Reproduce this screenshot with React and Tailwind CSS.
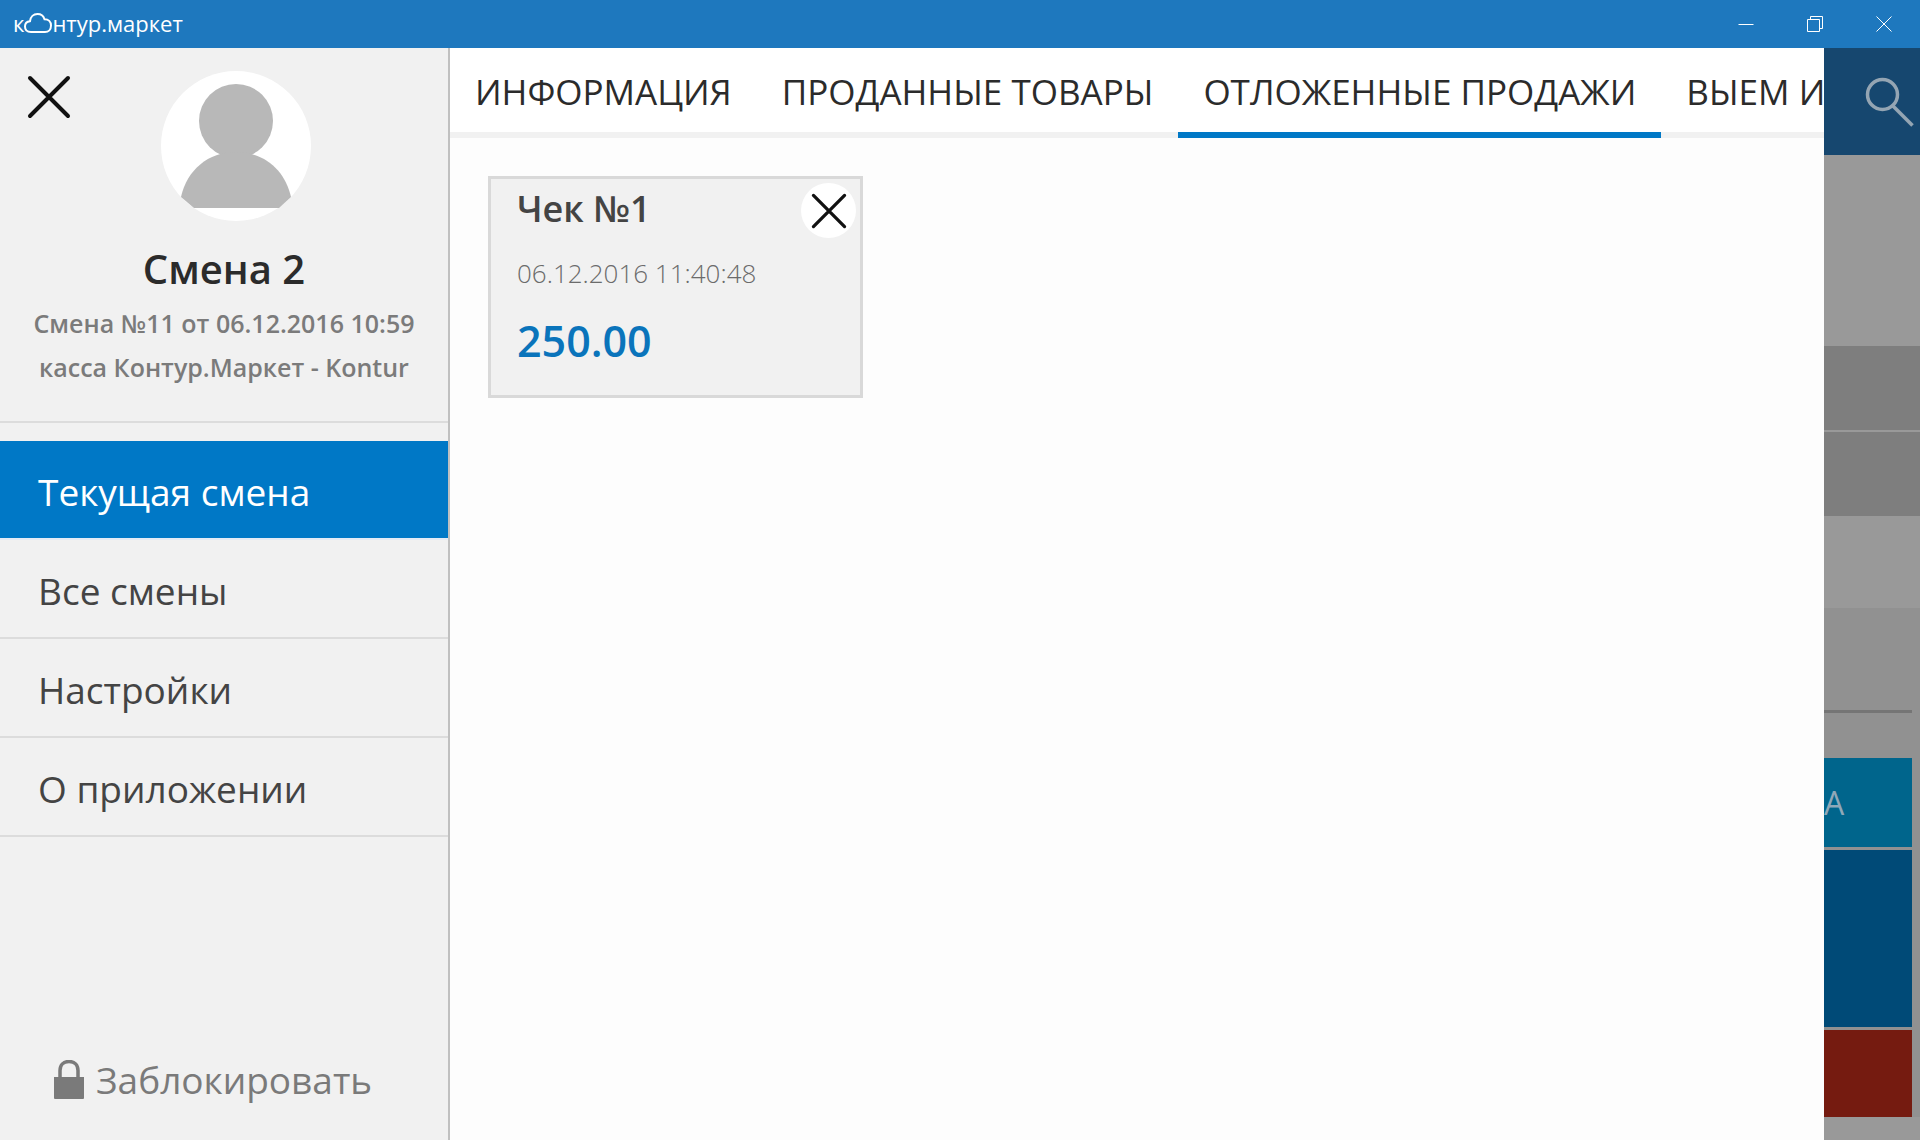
import clsx from 'clsx'

const menuItems = ['Текущая смена', 'Все смены', 'Настройки', 'О приложении']

const tabs = ['ИНФОРМАЦИЯ', 'ПРОДАННЫЕ ТОВАРЫ', 'ОТЛОЖЕННЫЕ ПРОДАЖИ', 'ВЫЕМ И']

const receipts = [{ id: 1, title: 'Чек №1', date: '06.12.2016 11:40:48', total: '250.00' }]

function CrossIcon({ className, strokeWidth }) {
  return (
    <svg className={className} viewBox="0 0 44 44" fill="none" stroke="currentColor" strokeWidth={strokeWidth} strokeLinecap="round" aria-hidden="true">
      <path d="M3 3L41 41M41 3L3 41" />
    </svg>
  )
}

function TitleBar() {
  return (
    <header className="flex h-12 shrink-0 items-center justify-between bg-[#1e78be] text-white">
      <div className="flex items-center pb-[2px] pl-[13px] text-[22px] leading-8">
        <span>к</span>
        <svg className="h-5 w-7" viewBox="0 0 28 20" fill="none" stroke="currentColor" strokeWidth="2" aria-label="о">
          <path d="M7 19C3.500 19 1 17 1 13.500C1 10.500 3 8.500 6 8.200C6.500 3.800 9.500 1 13.500 1C17 1 19.500 3 20.500 6.200C24.500 6.200 27 9 27 12.500C27 16.500 24.500 19 21 19Z" />
        </svg>
        <span>нтур.маркет</span>
      </div>
      <div className="flex h-full pr-[2px]">
        <button type="button" aria-label="Свернуть" className="flex w-[69px] items-center justify-center">
          <svg className="size-4" viewBox="0 0 16 16" stroke="currentColor" aria-hidden="true">
            <path d="M0.500 8.500H15.500" />
          </svg>
        </button>
        <button type="button" aria-label="Развернуть" className="flex w-[69px] items-center justify-center">
          <svg className="size-4" viewBox="0 0 16 16" fill="none" stroke="currentColor" aria-hidden="true">
            <path d="M0.500 3.500H12.500V15.500H0.500ZM3.500 3.500V0.500H15.500V12.500H12.500" />
          </svg>
        </button>
        <button type="button" aria-label="Закрыть окно" className="flex w-[69px] items-center justify-center">
          <svg className="size-4" viewBox="0 0 16 16" stroke="currentColor" aria-hidden="true">
            <path d="M0.500 0.500L15.500 15.500M15.500 0.500L0.500 15.500" />
          </svg>
        </button>
      </div>
    </header>
  )
}

function Sidebar() {
  return (
    <aside className="flex w-[450px] shrink-0 flex-col border-r-2 border-[#c0c0c0] bg-[#f1f1f1]">
      {/* Shift info */}
      <div className="border-b-2 border-[#dcdcdc] pb-8">
        <div className="flex items-start gap-[90px] pl-[27px] pt-[23px]">
          <button type="button" aria-label="Закрыть меню" className="pt-1 text-[#111]">
            <CrossIcon className="size-11" strokeWidth={4} />
          </button>
          <svg className="size-[150px]" viewBox="0 0 150 150" aria-hidden="true">
            <circle cx="75" cy="75" r="75" fill="#fff" />
            <circle cx="75" cy="50" r="37" fill="#b8b8b8" />
            <path d="M20 126C26 99 47 81 75 81S124 99 130 126L118 137H33Z" fill="#b8b8b8" />
          </svg>
        </div>
        <div className="px-4 pt-5 text-center font-semibold">
          <h1 className="text-[40px] leading-[56px] text-[#2b2b2b]">Смена 2</h1>
          <p className="pt-1 text-[25px] leading-11 text-[#7b7b7b]">
            Смена №11 от 06.12.2016 10:59
            <br />
            касса Контур.Маркет - Kontur
          </p>
        </div>
      </div>

      <nav className="pt-[18px]">
        {menuItems.map((item, index) => (
          <a
            key={item}
            href="#"
            className={clsx(
              'block border-b-2 px-[38px] pb-[18px] pt-[23px] text-[37px] leading-[56px]',
              index === 0 ? 'border-[#e4ebf5] bg-[#0078c6] bg-clip-padding text-white' : 'border-[#dcdcdc] text-[#444]'
            )}
          >
            {item}
          </a>
        ))}
      </nav>

      <button type="button" className="mt-auto mb-8 flex items-center gap-3 pl-[54px] text-[37px] leading-[56px] text-[#7a7a7a]">
        <svg className="h-10 w-[30px]" viewBox="0 0 30 40" aria-hidden="true">
          <path d="M0 17H30V38Q30 39 29 39H1Q0 39 0 38Z" fill="currentColor" />
          <path d="M6 18V10.500C6 5 9.500 1.500 15 1.500S24 5 24 10.500V18" fill="none" stroke="currentColor" strokeWidth="3.500" />
        </svg>
        Заблокировать
      </button>
    </aside>
  )
}

function ReceiptCard({ receipt }) {
  return (
    <article className="relative w-[375px] border-[3px] border-[#d9d9d9] bg-[#f1f1f1] px-[26px] pb-[22px] pt-[6px]">
      <h2 className="text-[36px] font-semibold leading-[48px] text-[#444]">{receipt.title}</h2>
      <p className="pt-4 text-[26px] font-light leading-[48px] text-[#6b6b6b]">{receipt.date}</p>
      <p className="pt-3 text-[43px] font-semibold leading-[64px] text-[#0a74bb]">{receipt.total}</p>
      <button
        type="button"
        aria-label="Удалить чек"
        className="absolute right-1 top-1 flex size-[55px] items-center justify-center rounded-full bg-white text-[#111]"
      >
        <CrossIcon className="size-9" strokeWidth={4} />
      </button>
    </article>
  )
}

function Content() {
  return (
    <main className="min-w-0 flex-1 bg-[#fdfdfd]">
      <div className="flex overflow-hidden bg-white">
        {tabs.map((tab, index) => (
          <button
            key={tab}
            type="button"
            className={clsx(
              'shrink-0 whitespace-nowrap border-b-6 px-[25px] pb-3 pt-4 text-[35px] leading-[56px] text-[#2b2b2b]',
              index === 2 ? 'border-[#0078c6]' : 'border-[#f1f1f1]'
            )}
          >
            {tab}
          </button>
        ))}
      </div>
      <div className="flex flex-wrap gap-6 px-[38px] py-[38px]">
        {receipts.map((receipt) => (
          <ReceiptCard key={receipt.id} receipt={receipt} />
        ))}
      </div>
    </main>
  )
}

/* Dimmed edge of the sale screen behind the open panel */
function SaleScreenEdge() {
  return (
    <div className="flex w-24 shrink-0 flex-col bg-[#999]">
      <div className="h-[107px] bg-[#16476f]">
        <button type="button" aria-label="Поиск" className="block pl-10 pt-7 text-[#94a5b3]">
          <svg className="size-[52px]" viewBox="0 0 52 52" fill="none" stroke="currentColor" strokeWidth="3.500" aria-hidden="true">
            <circle cx="18.500" cy="18.500" r="15" />
            <path d="M28.500 29.500L48.500 49.500" />
          </svg>
        </button>
      </div>
      <div className="mt-[191px] h-[84px] bg-[#7e7e7e]" />
      <div className="mt-[2px] h-[84px] bg-[#7e7e7e]" />
      <div className="mt-[92px] flex flex-col gap-[3px] bg-[#919191] pr-2">
        <div className="mb-[42px] h-[105px] border-b-3 border-[#757575]" />
        <button type="button" className="h-[89px] bg-[#00658c] text-left text-[32px] text-[#8fa8b8]">
          А
        </button>
        <div className="h-[177px] bg-[#004a77]" />
        <div className="h-[87px] bg-[#751b10]" />
      </div>
    </div>
  )
}

export default function App() {
  return (
    <div className="flex min-h-screen flex-col font-['Open_Sans','Noto_Sans',sans-serif]">
      <TitleBar />
      <div className="flex flex-1">
        <Sidebar />
        <Content />
        <SaleScreenEdge />
      </div>
    </div>
  )
}
